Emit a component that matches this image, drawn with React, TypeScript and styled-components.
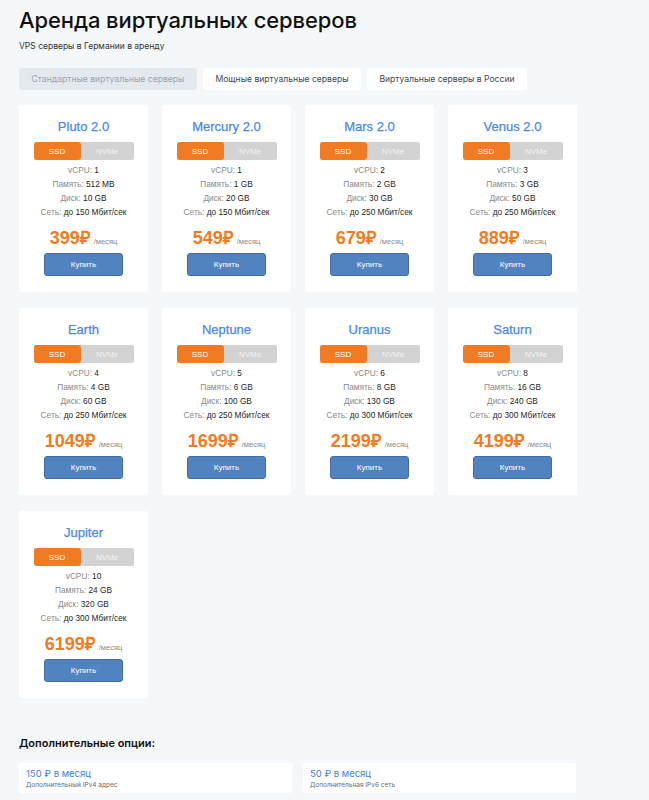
import React, { useState } from 'react';
import styled, { createGlobalStyle } from 'styled-components';

const GlobalStyle = createGlobalStyle`
	html, body {
		margin: 0;
		padding: 0;
		background: #f5f8fb;
	}
	body {
		font-family: Inter, "Noto Sans", sans-serif;
		color: #1a1a1a;
	}
`;

const Page = styled.div`
	width: 558px;
	padding: 6px 19px 12px;
`;

const Title = styled.h1`
	margin: 0;
	font-size: 22px;
	font-weight: 500;
	line-height: 28px;
	letter-spacing: -0.1px;
	color: #111;
`;

const Subtitle = styled.p`
	margin: 6px 0 0;
	font-size: 8.5px;
	line-height: 12px;
	color: #333;
`;

const Tabs = styled.div`
	display: flex;
	gap: 6px;
	margin-top: 16px;
`;

const Tab = styled.button<{ $active?: boolean; $width: number }>`
	width: ${(p) => p.$width}px;
	height: 22px;
	border: none;
	border-radius: 3px;
	padding: 0;
	font-family: Inter, "Noto Sans", sans-serif;
	font-size: 8.6px;
	cursor: pointer;
	background: ${(p) => (p.$active ? '#e4e9ee' : '#ffffff')};
	color: ${(p) => (p.$active ? '#9aa4af' : '#3d4854')};
`;

const Grid = styled.div`
	display: grid;
	grid-template-columns: repeat(4, 129px);
	column-gap: 14px;
	row-gap: 16px;
	margin-top: 15px;
`;

const Card = styled.div`
	height: 187px;
	box-sizing: border-box;
	background: #fff;
	border-radius: 3px;
	padding: 14px 14px 0;
	display: flex;
	flex-direction: column;
	align-items: center;
	font-family: "Liberation Sans", Arial, sans-serif;
`;

const Name = styled.div`
	font-size: 13px;
	line-height: 16px;
	color: #4a88ee;
	-webkit-text-stroke: 0.25px #4a88ee;
`;

const Toggle = styled.div`
	display: flex;
	width: 100px;
	height: 18px;
	margin-top: 7px;
	background: #d3d3d3;
	border-radius: 2px;
`;

const Segment = styled.div<{ $on?: boolean; $width: number }>`
	width: ${(p) => p.$width}px;
	display: flex;
	align-items: center;
	justify-content: center;
	font-size: 8px;
	border-radius: 3px;
	background: ${(p) => (p.$on ? '#f07b22' : 'transparent')};
	color: ${(p) => (p.$on ? '#fff' : '#f2f2f2')};
`;

const Specs = styled.div`
	margin-top: 3px;
	display: flex;
	flex-direction: column;
	align-items: center;
`;

const Spec = styled.div`
	font-size: 8.3px;
	line-height: 14px;
	color: #8a8a8a;
	white-space: nowrap;

	b {
		font-weight: normal;
		color: #1e1e1e;
	}
`;

const PriceRow = styled.div`
	margin-top: 8px;
	display: flex;
	align-items: baseline;
	gap: 4px;
`;

const Price = styled.span`
	font-size: 18px;
	font-weight: bold;
	line-height: 22px;
	color: #f07b22;
`;

const Per = styled.span`
	font-size: 7.5px;
	color: #8a8a8a;
`;

const BuyButton = styled.button`
	margin-top: 4px;
	width: 79px;
	height: 23px;
	border: 1px solid #3f6ea6;
	border-radius: 3px;
	background: #5183c0;
	color: #fff;
	font-family: "Liberation Sans", Arial, sans-serif;
	font-size: 8px;
	cursor: pointer;
`;

const OptionsTitle = styled.h2`
	margin: 38px 0 0;
	font-size: 11px;
	font-weight: 600;
	line-height: 14px;
	color: #111;
`;

const Options = styled.div`
	display: grid;
	grid-template-columns: 273px 273px;
	column-gap: 11px;
	margin-top: 13px;
`;

const Option = styled.div`
	background: #fff;
	border-radius: 3px;
	padding: 5px 7px 7px;
	height: 30px;
	box-sizing: border-box;
`;

const OptionPrice = styled.div`
	font-size: 9.5px;
	line-height: 12px;
	color: #3f7fe6;
`;

const OptionText = styled.div`
	margin-top: 1px;
	font-size: 6.5px;
	line-height: 9px;
	color: #6b6b6b;
`;

type Plan = {
	name: string;
	cpu: string;
	ram: string;
	disk: string;
	net: string;
	price: string;
};

const plans: Plan[] = [
	{ name: 'Pluto 2.0', cpu: '1', ram: '512 MB', disk: '10 GB', net: 'до 150 Мбит/сек', price: '399' },
	{ name: 'Mercury 2.0', cpu: '1', ram: '1 GB', disk: '20 GB', net: 'до 150 Мбит/сек', price: '549' },
	{ name: 'Mars 2.0', cpu: '2', ram: '2 GB', disk: '30 GB', net: 'до 250 Мбит/сек', price: '679' },
	{ name: 'Venus 2.0', cpu: '3', ram: '3 GB', disk: '50 GB', net: 'до 250 Мбит/сек', price: '889' },
	{ name: 'Earth', cpu: '4', ram: '4 GB', disk: '60 GB', net: 'до 250 Мбит/сек', price: '1049' },
	{ name: 'Neptune', cpu: '5', ram: '6 GB', disk: '100 GB', net: 'до 250 Мбит/сек', price: '1699' },
	{ name: 'Uranus', cpu: '6', ram: '8 GB', disk: '130 GB', net: 'до 300 Мбит/сек', price: '2199' },
	{ name: 'Saturn', cpu: '8', ram: '16 GB', disk: '240 GB', net: 'до 300 Мбит/сек', price: '4199' },
	{ name: 'Jupiter', cpu: '10', ram: '24 GB', disk: '320 GB', net: 'до 300 Мбит/сек', price: '6199' },
];

const tabs = [
	{ label: 'Стандартные виртуальные серверы', width: 178 },
	{ label: 'Мощные виртуальные серверы', width: 158 },
	{ label: 'Виртуальные серверы в России', width: 160 },
];

const PlanCard = ({ plan }: { plan: Plan }) => {
	const [disk, setDisk] = useState<'ssd' | 'nvme'>('ssd');
	return (
		<Card>
			<Name>{plan.name}</Name>
			<Toggle>
				<Segment $width={47} $on={disk === 'ssd'} onClick={() => setDisk('ssd')}>
					SSD
				</Segment>
				<Segment $width={53} $on={disk === 'nvme'} onClick={() => setDisk('nvme')}>
					NVMe
				</Segment>
			</Toggle>
			<Specs>
				<Spec>
					vCPU: <b>{plan.cpu}</b>
				</Spec>
				<Spec>
					Память: <b>{plan.ram}</b>
				</Spec>
				<Spec>
					Диск: <b>{plan.disk}</b>
				</Spec>
				<Spec>
					Сеть: <b>{plan.net}</b>
				</Spec>
			</Specs>
			<PriceRow>
				<Price>{plan.price}₽</Price>
				<Per>/месяц</Per>
			</PriceRow>
			<BuyButton>Купить</BuyButton>
		</Card>
	);
};

export default function App() {
	const [tab, setTab] = useState(0);
	return (
		<>
			<GlobalStyle />
			<Page>
				<Title>Аренда виртуальных серверов</Title>
				<Subtitle>VPS серверы в Германии в аренду</Subtitle>
				<Tabs>
					{tabs.map((t, i) => (
						<Tab key={t.label} $width={t.width} $active={i === tab} onClick={() => setTab(i)}>
							{t.label}
						</Tab>
					))}
				</Tabs>
				<Grid>
					{plans.map((p) => (
						<PlanCard key={p.name} plan={p} />
					))}
				</Grid>
				<OptionsTitle>Дополнительные опции:</OptionsTitle>
				<Options>
					<Option>
						<OptionPrice>150 ₽ в месяц</OptionPrice>
						<OptionText>Дополнительный IPv4 адрес</OptionText>
					</Option>
					<Option>
						<OptionPrice>50 ₽ в месяц</OptionPrice>
						<OptionText>Дополнительная IPv6 сеть</OptionText>
					</Option>
				</Options>
			</Page>
		</>
	);
}
